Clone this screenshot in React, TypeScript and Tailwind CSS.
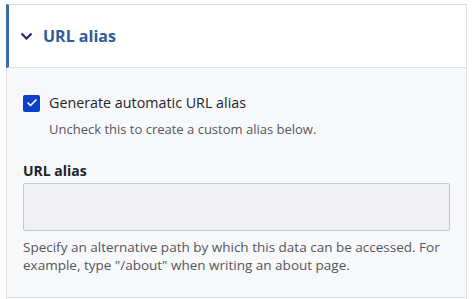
import { Check } from 'lucide-react';

export default function App() {
  return (
    <div className="min-h-[299px] bg-white pt-[4px] pl-[6px] font-['Open_Sans',Arial,sans-serif]">
      <div className="w-[461px]">
        {/* Summary */}
        <div className="flex h-[64px] items-center border border-[#dcdde2] border-l-[3px] border-l-[#3b6aa5] bg-white pl-[11px]">
          <svg width="13" height="9" viewBox="0 0 13 9" className="mr-[10px] mt-[1px]">
            <path d="M1.5 1.5 L6.5 6.5 L11.5 1.5" fill="none" stroke="#1f2b6e" strokeWidth="2.2" />
          </svg>
          <span className="text-[16px] font-bold text-[#2d5c9c]">URL alias</span>
        </div>

        {/* Body */}
        <div className="border-x border-b border-[#e1e2e6] bg-[#f7f8fa] pl-[16px] pr-[16px] pt-[26px] pb-[23px]">
          <label className="flex items-center gap-[9px]">
            <span className="flex h-[17px] w-[17px] items-center justify-center rounded-[2px] bg-[#0a3fc7]">
              <Check className="h-[12px] w-[12px] text-white" strokeWidth={3.5} />
            </span>
            <span className="text-[14.3px] leading-[18px] text-[#232429]">Generate automatic URL alias</span>
          </label>
          <p className="mt-[8px] pl-[26px] text-[13px] leading-[18px] text-[#55565b]">Uncheck this to create a custom alias below.</p>

          <div className="mt-[24px] text-[14px] font-bold leading-[18px] text-[#232429]">URL alias</div>
          <div className="mt-[3px] h-[48px] w-[427px] rounded-[2px] border border-[#c6c7cc] bg-[#f0f0f2]" />
          <p className="mt-[7px] text-[13.5px] leading-[18px] text-[#55565b]">
            Specify an alternative path by which this data can be accessed. For example, type "/about" when writing an about page.
          </p>
        </div>
        <div className="h-[10px] border-x border-[#e1e2e6] bg-white" />
      </div>
    </div>
  );
}
